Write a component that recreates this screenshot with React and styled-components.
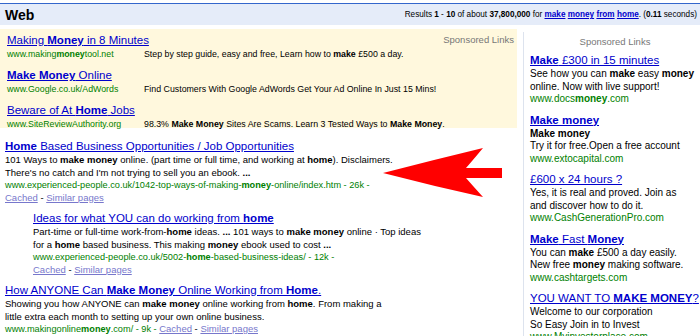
import styled, { createGlobalStyle } from 'styled-components';

const Global = createGlobalStyle`
  body {
    margin: 0;
    background: #fff;
    font-family: "Liberation Sans", Arial, sans-serif;
    overflow: hidden;
  }
  b { font-weight: bold; }
`;

const ads = [
  {
    title: <>Making <b>Money</b> in 8 Minutes</>,
    url: <>www.making<b>money</b>tool.net</>,
    desc: <>Step by step guide, easy and free, Learn how to <b>make</b> £500 a day.</>,
  },
  {
    title: <><b>Make Money</b> Online</>,
    url: <>www.Google.co.uk/AdWords</>,
    desc: <>Find Customers With Google AdWords Get Your Ad Online In Just 15 Mins!</>,
  },
  {
    title: <>Beware of At <b>Home</b> Jobs</>,
    url: <>www.SiteReviewAuthority.org</>,
    desc: <>98.3% <b>Make Money</b> Sites Are Scams. Learn 3 Tested Ways to <b>Make Money</b>.</>,
  },
];

const sideAds = [
  {
    title: <><b>Make</b> £300 in 15 minutes</>,
    lines: [<>See how you can <b>make</b> easy <b>money</b></>, <>online. Now with live support!</>],
    url: <>www.docs<b>money</b>.com</>,
  },
  {
    title: <><b>Make money</b></>,
    lines: [<><b>Make money</b></>, <>Try it for free.Open a free account</>],
    url: <>www.extocapital.com</>,
  },
  {
    title: <>£600 x 24 hours ?</>,
    lines: [<>Yes, it is real and proved. Join as</>, <>and discover how to do it.</>],
    url: <>www.CashGenerationPro.com</>,
  },
  {
    title: <><b>Make</b> Fast <b>Money</b></>,
    lines: [<>You can <b>make</b> £500 a day easily.</>, <>New free <b>money</b> making software.</>],
    url: <>www.cashtargets.com</>,
  },
  {
    title: <>YOU WANT TO <b>MAKE MONEY</b>?</>,
    lines: [<>Welcome to our corporation</>, <>So Easy Join in to Invest</>],
    url: <>www.Myinvestorplace.com</>,
  },
];

const App = () => {
  return (
    <Page>
      <Global />
      <Header>
        <HeaderTitle>Web</HeaderTitle>
        <Stats>
          Results <b>1</b> - <b>10</b> of about <b>37,800,000</b> for{' '}
          <QueryLink>make</QueryLink> <QueryLink>money</QueryLink>{' '}
          <QueryLink>from</QueryLink> <QueryLink>home</QueryLink>. (<b>0.11</b> seconds)
        </Stats>
      </Header>

      <Columns>
        <Main>
          <AdBox>
            <AdLabel>Sponsored Links</AdLabel>
            {ads.map((ad, i) => (
              <Ad key={i}>
                <Title href="#">{ad.title}</Title>
                <AdRow>
                  <Url>{ad.url}</Url>
                  <Desc>{ad.desc}</Desc>
                </AdRow>
              </Ad>
            ))}
          </AdBox>

          <Results>
            <Result>
              <Title href="#"><b>Home</b> Based Business Opportunities / Job Opportunities</Title>
              <Snippet>
                101 Ways to <b>make money</b> online. (part time or full time, and working at <b>home</b>). Disclaimers.
                <br />
                There's no catch and I'm not trying to sell you an ebook. <b>...</b>
                <br />
                <Url $small>www.experienced-people.co.uk/1042-top-ways-of-making-<b>money</b>-online/index.htm - 26k - </Url>
                <br />
                <SubLink href="#">Cached</SubLink> - <SubLink href="#">Similar pages</SubLink>
              </Snippet>
            </Result>

            <Result $indent>
              <Title href="#">Ideas for what YOU can do working from <b>home</b></Title>
              <Snippet>
                Part-time or full-time work-from-<b>home</b> ideas. <b>...</b> 101 ways to <b>make money</b> online · Top ideas
                <br />
                for a <b>home</b> based business. This making <b>money</b> ebook used to cost <b>...</b>
                <br />
                <Url $small>www.experienced-people.co.uk/5002-<b>home</b>-based-business-ideas/ - 12k - </Url>
                <br />
                <SubLink href="#">Cached</SubLink> - <SubLink href="#">Similar pages</SubLink>
              </Snippet>
            </Result>

            <Result>
              <Title href="#">How ANYONE Can <b>Make Money</b> Online Working from <b>Home</b>.</Title>
              <Snippet>
                Showing you how ANYONE can <b>make money</b> online working from <b>home</b>. From making a
                <br />
                little extra each month to setting up your own online business.
                <br />
                <Url $small>www.makingonline<b>money</b>.com/ - 9k - </Url>
                <SubLink href="#">Cached</SubLink> - <SubLink href="#">Similar pages</SubLink>
              </Snippet>
            </Result>
          </Results>
        </Main>

        <Side>
          <SideLabel>Sponsored Links</SideLabel>
          {sideAds.map((ad, i) => (
            <SideAd key={i}>
              <Title href="#">{ad.title}</Title>
              <SideText>
                {ad.lines.map((l, j) => (
                  <div key={j}>{l}</div>
                ))}
                <Url>{ad.url}</Url>
              </SideText>
            </SideAd>
          ))}
        </Side>

        <Arrow viewBox="0 0 120 50" aria-hidden="true">
          <path d="M0 25 Q50 12 100 0 Q90 12 83 20 L119 20 L119 30 L83 30 Q90 38 100 49 Q50 38 0 25 Z" fill="#ff0000" />
        </Arrow>
      </Columns>
    </Page>
  );
};

const Page = styled.div`
  width: 700px;
  height: 336px;
  overflow: hidden;
  padding-top: 3px;
  box-sizing: border-box;
`;

const Header = styled.div`
  display: flex;
  justify-content: space-between;
  align-items: center;
  height: 21px;
  border-top: 1px solid #3366cc;
  background: #e5ecf9;
  padding: 0 3px 0 5px;
`;

const HeaderTitle = styled.div`
  font-size: 14px;
  font-weight: bold;
  color: #000;
`;

const Stats = styled.div`
  font-size: 8.2px;
  color: #000;
  white-space: nowrap;
`;

const QueryLink = styled.a`
  color: #0000cc;
  font-weight: bold;
  text-decoration: underline;
`;

const Columns = styled.div`
  position: relative;
  display: flex;
  align-items: flex-start;
  margin-top: 4px;
`;

const Main = styled.div`
  width: 517px;
  flex-shrink: 0;
`;

const AdBox = styled.div`
  position: relative;
  background: #fff8dd;
  padding: 4px 0 6px 7px;
  height: 99px;
  box-sizing: border-box;
`;

const AdLabel = styled.div`
  position: absolute;
  top: 5px;
  right: 3px;
  font-size: 9.5px;
  color: #777;
`;

const Ad = styled.div`
  margin-bottom: 7px;
`;

const Title = styled.a`
  display: block;
  font-size: 11.5px;
  line-height: 15px;
  color: #0000cc;
  text-decoration: underline;
  white-space: nowrap;
`;

const AdRow = styled.div`
  display: grid;
  grid-template-columns: 137px auto;
  font-size: 8.8px;
  line-height: 13px;
`;

const Url = styled.span`
  color: #008000;
  white-space: nowrap;
  font-size: ${(p) => (p.$small ? '9.2px' : 'inherit')};
`;

const Desc = styled.span`
  color: #000;
  white-space: nowrap;
`;

const Results = styled.div`
  padding: 11px 0 0 5px;
`;

const Result = styled.div`
  margin: 0 0 7px ${(p) => (p.$indent ? '28px' : '0')};
`;

const Snippet = styled.div`
  font-size: 9.5px;
  line-height: 12.5px;
  color: #000;
  white-space: nowrap;
`;

const SubLink = styled.a`
  color: #7777cc;
  text-decoration: underline;
`;

const Side = styled.div`
  margin-left: 6px;
  margin-top: 3px;
  padding: 4px 0 0 6px;
  border-left: 1px solid #dde3ee;
  flex: 1;
  height: 320px;
`;

const SideLabel = styled.div`
  font-size: 9.5px;
  color: #777;
  text-align: center;
  margin-bottom: 6px;
`;

const SideAd = styled.div`
  margin-bottom: 7px;
`;

const SideText = styled.div`
  font-size: 10px;
  line-height: 12.5px;
  color: #000;
  white-space: nowrap;
`;

const Arrow = styled.svg`
  position: absolute;
  left: 383px;
  top: 119px;
  width: 120px;
  height: 50px;
`;

export default App;
